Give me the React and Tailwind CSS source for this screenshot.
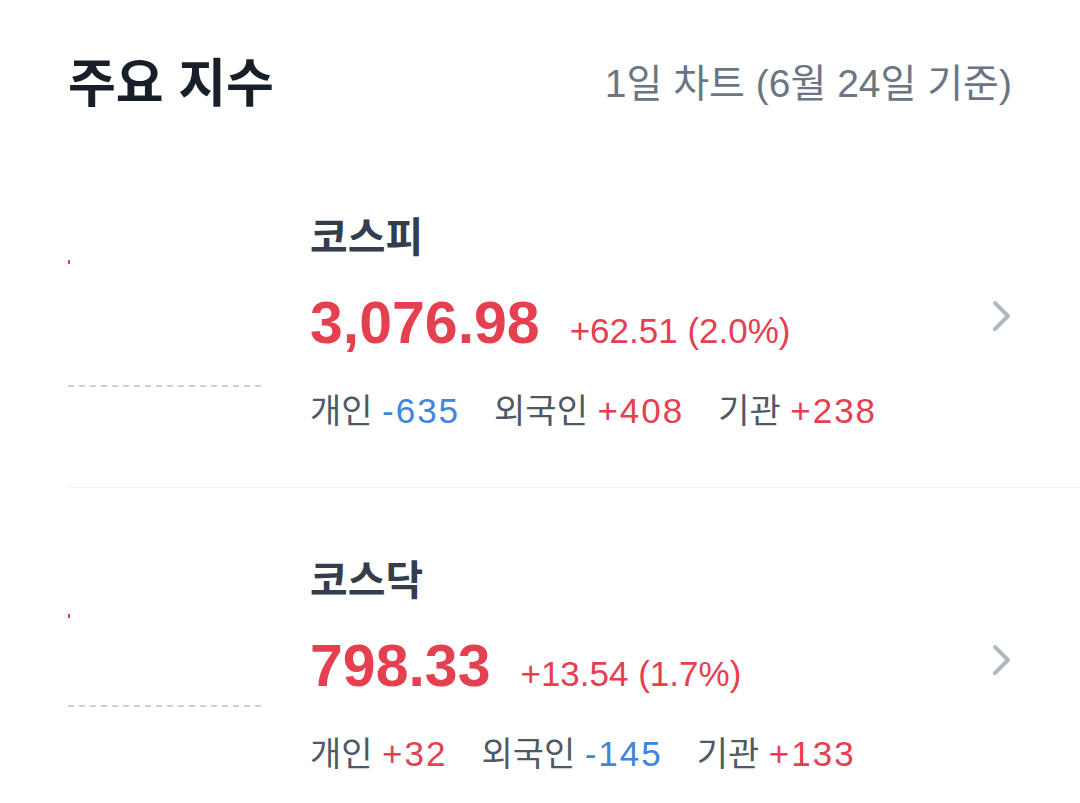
import React from 'react';

const font = { fontFamily: '"Liberation Sans", "Noto Sans CJK KR", sans-serif' };

const indices = [
  {
    name: '코스피',
    price: '3,076.98',
    change: '+62.51 (2.0%)',
    dotY: 117,
    lineY: 241,
    flows: [
      { label: '개인', value: '-635' },
      { label: '외국인', value: '+408' },
      { label: '기관', value: '+238' },
    ],
  },
  {
    name: '코스닥',
    price: '798.33',
    change: '+13.54 (1.7%)',
    dotY: 128,
    lineY: 218,
    flows: [
      { label: '개인', value: '+32' },
      { label: '외국인', value: '-145' },
      { label: '기관', value: '+133' },
    ],
  },
];

function MiniChart({ dotY, lineY }) {
  return (
    <svg width="194" height="343" viewBox="0 0 194 343" className="shrink-0">
      <rect x="0" y={dotY - 2} width="2" height="4" fill="#d8424f" />
      <line x1="0" y1={lineY} x2="194" y2={lineY} stroke="#cdd1d6" strokeWidth="2" strokeDasharray="6 5" />
    </svg>
  );
}

function IndexRow({ item, last }) {
  return (
    <div className={`flex items-center h-[343px] ${last ? '' : 'border-b border-[#f2f3f5]'}`}>
      <MiniChart dotY={item.dotY} lineY={item.lineY} />
      <div className="flex-1 self-start pt-[68px] ml-[48px] flex flex-col">
        <div className="text-[41px] leading-[50px] font-bold text-[#333d4b]">{item.name}</div>
        <div className="flex items-baseline mt-[28px] h-[64px]">
          <span className="text-[59px] leading-[64px] font-bold text-[#e5404f]">{item.price}</span>
          <span className="ml-[30px] text-[35px] leading-[40px] text-[#e5404f]">{item.change}</span>
        </div>
        <div className="flex mt-[35px] text-[34px] leading-[42px] text-[#4e5968]">
          {item.flows.map((f, i) => (
            <span key={i} className={i > 0 ? 'ml-[34px]' : ''}>
              {f.label}{' '}
              <span className={`text-[35px] tracking-[2px] ${f.value.startsWith('-') ? 'text-[#3f86da]' : 'text-[#e5404f]'}`}>{f.value}</span>
            </span>
          ))}
        </div>
      </div>
      <svg width="20" height="32" viewBox="0 0 20 32" className="mr-[68px] shrink-0">
        <path d="M3 3 L16 16 L3 29" fill="none" stroke="#b0b8c1" strokeWidth="4" strokeLinecap="round" strokeLinejoin="round" />
      </svg>
    </div>
  );
}

export default function App() {
  return (
    <div className="w-[1080px] h-[803px] overflow-hidden bg-white pl-[68px]" style={font}>
      <div className="flex items-center justify-between h-[145px] pr-[68px] pt-[22px]">
        <h1 className="text-[52px] leading-[60px] font-bold text-[#191f28]">주요 지수</h1>
        <span className="text-[39px] leading-[48px] text-[#6b7684]">1일 차트 (6월 24일 기준)</span>
      </div>
      {indices.map((item, i) => (
        <IndexRow key={item.name} item={item} last={i === indices.length - 1} />
      ))}
    </div>
  );
}
